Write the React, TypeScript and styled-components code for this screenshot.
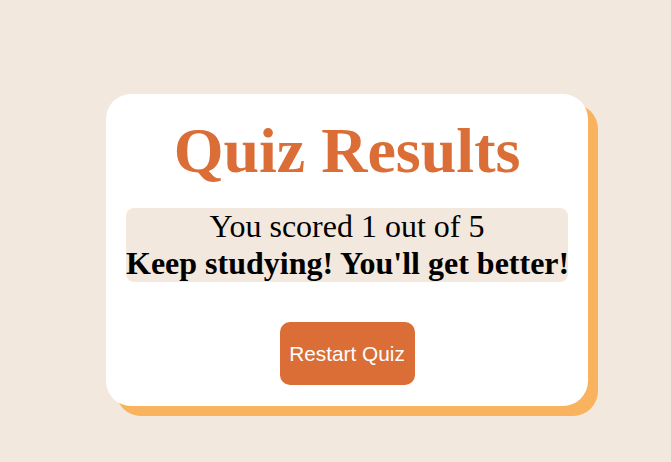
import React from "react";
import styled, { createGlobalStyle } from "styled-components";

const GlobalStyle = createGlobalStyle`
  html, body {
    margin: 0;
    padding: 0;
    background: #f3e8dd;
  }
  body {
    font-family: "Liberation Serif", "Times New Roman", serif;
  }
`;

const Page = styled.div`
  display: flex;
  align-items: flex-start;
  padding: 94px 0 0 106px;
  min-height: 462px;
  box-sizing: border-box;
`;

const Card = styled.div`
  width: 482px;
  box-sizing: border-box;
  padding: 20px 20px 21px;
  background: #ffffff;
  border-radius: 25px;
  box-shadow: 10px 10px 0 #f9b25d;
  display: flex;
  flex-direction: column;
  align-items: center;
`;

const Title = styled.h1`
  margin: 0;
  font-family: "Liberation Serif", "Times New Roman", serif;
  font-size: 64px;
  font-weight: bold;
  line-height: normal;
  color: #da6e36;
  text-align: center;
`;

const ScoreBox = styled.div`
  align-self: stretch;
  margin-top: 20px;
  background: #f3e8dd;
  border-radius: 8px;
  font-size: 32px;
  line-height: normal;
  color: #000;
  text-align: center;
`;

const ScoreLine = styled.div<{ $bold?: boolean }>`
  font-weight: ${(p) => (p.$bold ? "bold" : "normal")};
  white-space: nowrap;
`;

const RestartButton = styled.button`
  margin-top: 40px;
  width: 135px;
  height: 63px;
  padding: 0;
  border: none;
  border-radius: 10px;
  background: #da6e36;
  color: #ffffff;
  font-family: "Liberation Sans", Arial, sans-serif;
  font-size: 20.8px;
  cursor: pointer;
`;

export default function App() {
  return (
    <>
      <GlobalStyle />
      <Page>
        <Card>
          <Title>Quiz Results</Title>
          <ScoreBox>
            <ScoreLine>You scored 1 out of 5</ScoreLine>
            <ScoreLine $bold>Keep studying! You'll get better!</ScoreLine>
          </ScoreBox>
          <RestartButton>Restart Quiz</RestartButton>
        </Card>
      </Page>
    </>
  );
}
